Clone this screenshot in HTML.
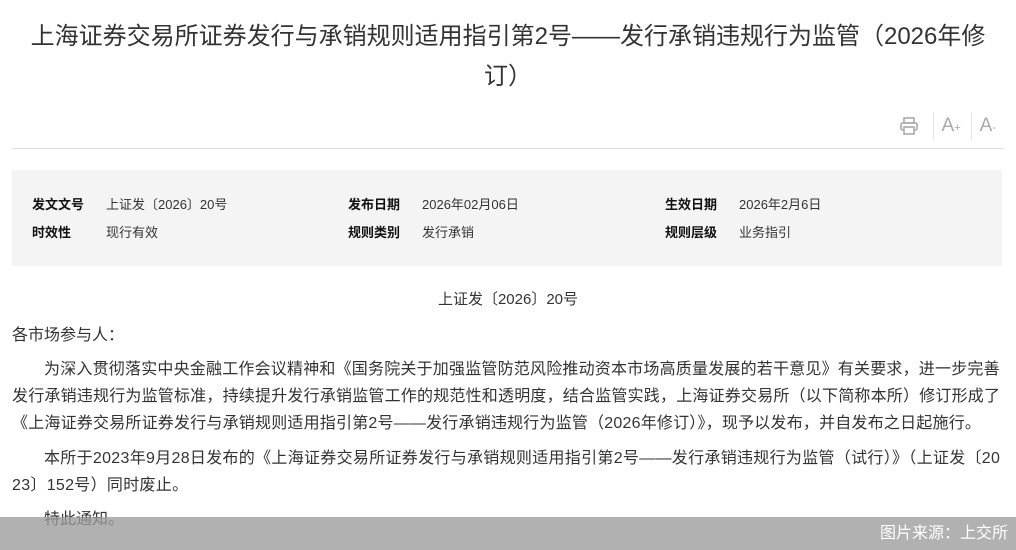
<!DOCTYPE html>
<html><head><meta charset="utf-8"><style>
body{margin:0;width:1016px;height:550px;overflow:hidden;background:#fff;font-family:"Liberation Sans","Noto Sans CJK SC",sans-serif;color:#333;position:relative}
.t{position:absolute;left:0;width:1016px;text-align:center;font-size:24px;line-height:40px;top:17px;color:#333}
.tools{position:absolute;top:112px;right:10px;display:flex;align-items:center;color:#aaa;font-size:19px}
.tools span{display:inline-block;padding:0 10px 0 8px;border-left:1px solid #e5e5e5;height:28px;line-height:28px}
.hr{position:absolute;left:12px;right:12px;top:148px;border-top:1px solid #ddd}
.info{position:absolute;left:12px;top:170px;width:990px;height:96px;background:#f4f4f4;font-size:13px}
.info div{position:absolute}
.info b{color:#111;display:inline-block;width:74px}
.p{position:absolute;font-size:16px;line-height:27px;color:#333}
.bar{position:absolute;left:0;top:517px;width:1016px;height:33px;background:rgba(155,155,155,0.78);color:#fff;font-size:16px;text-align:right;line-height:33px}
</style></head><body>
<div class="t">上海证券交易所证券发行与承销规则适用指引第2号——发行承销违规行为监管（2026年修<br>订）</div>
<div class="tools"><svg width="20" height="20" viewBox="0 0 20 20" style="margin-right:14px"><rect x="5" y="2" width="10" height="5" fill="none" stroke="#aaa" stroke-width="1.6"/><rect x="2" y="7" width="16" height="7" rx="1.5" fill="none" stroke="#aaa" stroke-width="1.6"/><rect x="5" y="11" width="10" height="7" fill="#fff" stroke="#aaa" stroke-width="1.6"/></svg><span>A<small style="font-size:11px">+</small></span><span>A<small style="font-size:11px">-</small></span></div>
<div class="hr"></div>
<div class="info">
<div style="left:20px;top:24px"><b>发文文号</b>上证发〔2026〕20号</div>
<div style="left:336px;top:24px"><b>发布日期</b>2026年02月06日</div>
<div style="left:653px;top:24px"><b>生效日期</b>2026年2月6日</div>
<div style="left:20px;top:52px"><b>时效性</b>现行有效</div>
<div style="left:336px;top:52px"><b>规则类别</b>发行承销</div>
<div style="left:653px;top:52px"><b>规则层级</b>业务指引</div>
</div>
<div class="p" style="left:0;width:1016px;text-align:center;top:286px;font-size:15px">上证发〔2026〕20号</div>
<div class="p" style="left:12px;top:322px">各市场参与人：</div>
<div class="p" style="left:12px;width:994px;top:356px;text-indent:32px;letter-spacing:0.2px;word-break:break-all">为深入贯彻落实中央金融工作会议精神和《国务院关于加强监管防范风险推动资本市场高质量发展的若干意见》有关要求，进一步完善发行承销违规行为监管标准，持续提升发行承销监管工作的规范性和透明度，结合监管实践，上海证券交易所（以下简称本所）修订形成了《上海证券交易所证券发行与承销规则适用指引第2号——发行承销违规行为监管（2026年修订）》，现予以发布，并自发布之日起施行。</div>
<div class="p" style="left:12px;width:994px;top:445px;text-indent:32px;letter-spacing:0.3px;word-break:break-all">本所于2023年9月28日发布的《上海证券交易所证券发行与承销规则适用指引第2号——发行承销违规行为监管（试行）》（上证发〔20<br>23〕152号）同时废止。</div>
<div class="p" style="left:44px;top:506px">特此通知。</div>
<div class="bar"><span style="margin-right:8px">图片来源：上交所</span></div>
</body></html>
